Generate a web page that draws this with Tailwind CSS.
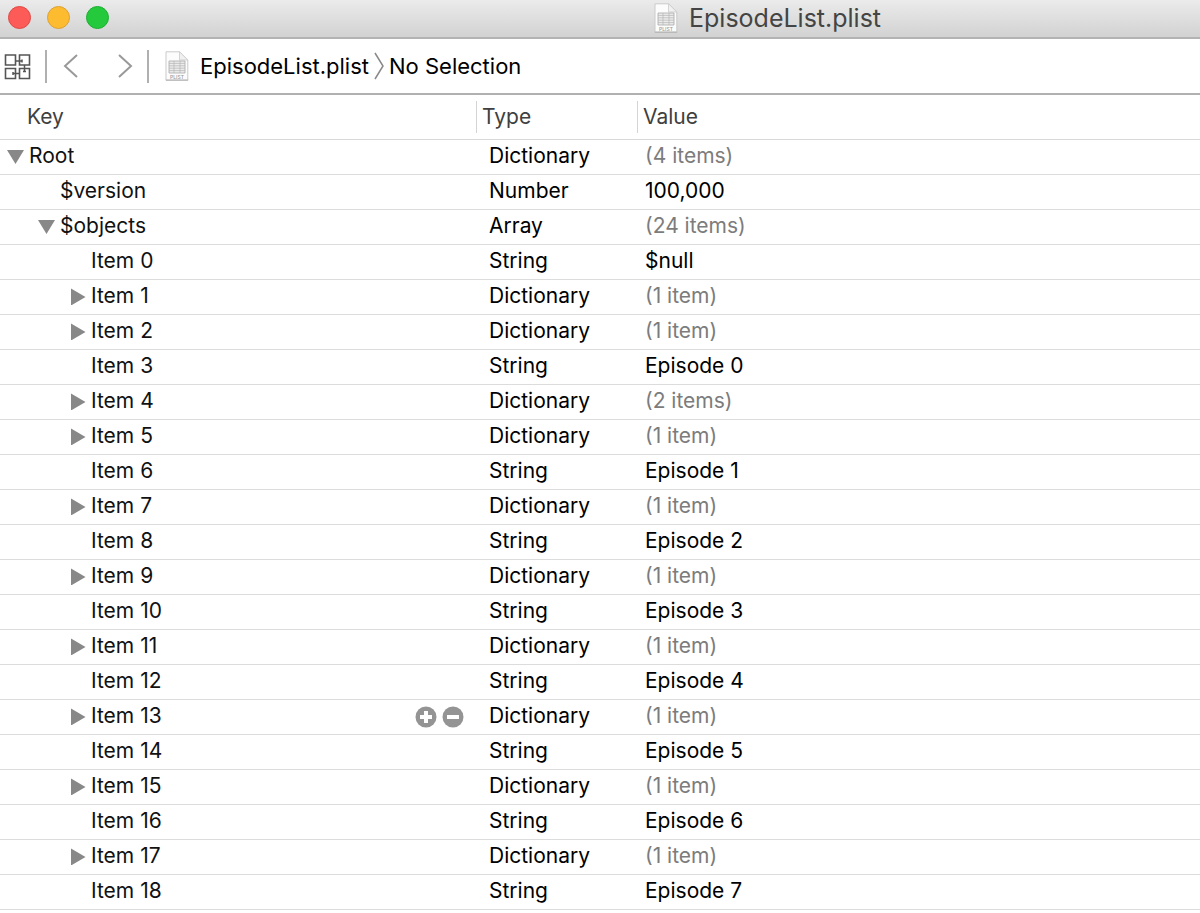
<!DOCTYPE html>
<html lang="en">
<head>
<meta charset="utf-8">
<meta name="viewport" content="width=device-width, initial-scale=1">
<title>EpisodeList.plist</title>
<script src="https://cdn.jsdelivr.net/npm/@tailwindcss/browser@4"></script>
</head>
<body class="min-h-screen overflow-x-hidden bg-white font-['Inter','Liberation_Sans',sans-serif] text-[21px] leading-7 text-[#111]">

<svg class="hidden" aria-hidden="true">
  <symbol id="plist" viewBox="0 0 24 30">
    <path d="M1 .8h13.500L22.800 9v20H1z" fill="#fcfcfc" stroke="#cacaca" stroke-width="1"/>
    <path d="M.8 29.200h22.400" stroke="#b0b0b0" stroke-width="1"/>
    <path d="M14.500.8V9h8.300z" fill="#f1f1f1" stroke="#cacaca" stroke-width=".8"/>
    <path d="M4 10h16v12H4z" fill="#ececec" stroke="#a8a8a8" stroke-width=".8"/>
    <path d="M4 12.400h16M4 14.800h16M4 17.200h16M4 19.600h16M9 10v12M15 10v12" stroke="#b4b4b4" stroke-width=".7"/>
    <text x="12" y="28" text-anchor="middle" font-size="5" font-weight="500" fill="#999">PLIST</text>
  </symbol>
</svg>

<header class="flex h-[39px] items-center border-b-2 border-[#b3b3b3] bg-linear-to-b from-[#ebebeb] to-[#d2d2d2]">
  <div class="flex w-[54.500%] shrink-0 gap-4 pb-0.5 pl-2">
    <button aria-label="Close" class="size-[23px] rounded-full border border-[#dd4a45] bg-[#fc5b57]"></button>
    <button aria-label="Minimize" class="size-[23px] rounded-full border border-[#dda033] bg-[#fdbc2f]"></button>
    <button aria-label="Zoom" class="size-[23px] rounded-full border border-[#1fae34] bg-[#24ca3c]"></button>
  </div>
  <h1 class="flex items-center gap-[11px] pb-0.5 text-[25px] whitespace-nowrap text-[#444]">
    <svg class="h-[30px] w-6" aria-hidden="true"><use href="#plist"/></svg>EpisodeList.plist
  </h1>
</header>

<nav aria-label="Jump bar" class="flex h-14 items-center border-b-2 border-[#b0b0b0] text-[22px] whitespace-nowrap text-black">
  <button aria-label="Related items" class="ml-1">
    <svg class="h-7 w-[27px]" viewBox="0 0 27 28" fill="none" stroke="#555" stroke-width="1.600" aria-hidden="true">
      <path d="M1.500 3h10v10h-10zM15.500 3h10v10h-10zM1.500 16.500h10v10h-10zM15.500 16.500h10v10h-10z"/>
      <path d="M11.500 9h6.500M20.500 13v6.500M9 21.500h6.500M18 7.500v3M19 19.500h3M9 20v3" stroke-width="1.500"/>
    </svg>
  </button>
  <span class="ml-3.5 h-[33px] w-0.5 bg-[#b0b0b0]"></span>
  <button aria-label="Back" class="ml-4">
    <svg class="h-6 w-4" viewBox="0 0 16 24" fill="none" stroke="#999" stroke-width="2" aria-hidden="true"><path d="M14 1 2 12l12 11"/></svg>
  </button>
  <button aria-label="Forward" class="ml-[38px]">
    <svg class="h-6 w-4" viewBox="0 0 16 24" fill="none" stroke="#999" stroke-width="2" aria-hidden="true"><path d="m2 1 12 11L2 23"/></svg>
  </button>
  <span class="ml-[14px] h-[33px] w-0.5 bg-[#b0b0b0]"></span>
  <a href="#" class="ml-4 flex items-center gap-[11px]">
    <svg class="h-[30px] w-6" aria-hidden="true"><use href="#plist"/></svg>EpisodeList.plist
  </a>
  <svg class="mx-1 h-7 w-3" viewBox="0 0 12 28" fill="none" stroke="#888" stroke-width="1.500" aria-hidden="true"><path d="m2 1 8 13-8 13"/></svg>
  <a href="#">No Selection</a>
</nav>

<table class="w-full table-fixed border-separate border-spacing-0 text-left">
  <colgroup><col class="w-[476px]"><col class="w-[161px]"><col></colgroup>
  <thead class="text-[#404040]">
    <tr>
      <th scope="col" class="h-[45px] border-b border-[#d9d9d9] p-0 pl-[27px] font-normal">Key</th>
      <th scope="col" class="h-[45px] border-b border-[#d9d9d9] p-0 font-normal"><div class="border-l border-[#d4d4d4] py-0.5 pl-[5px]">Type</div></th>
      <th scope="col" class="h-[45px] border-b border-[#d9d9d9] p-0 font-normal"><div class="border-l border-[#d4d4d4] py-0.5 pl-[5px]">Value</div></th>
    </tr>
  </thead>
  <tbody id="rows"></tbody>
</table>

<script>
// [depth, state, key, type, value]
const entries = [
  [0, 'open', 'Root', 'Dictionary', '(4 items)'],
  [1, '', '$version', 'Number', '100,000'],
  [1, 'open', '$objects', 'Array', '(24 items)'],
  [2, '', 'Item 0', 'String', '$null'],
  [2, 'closed', 'Item 1', 'Dictionary', '(1 item)'],
  [2, 'closed', 'Item 2', 'Dictionary', '(1 item)'],
  [2, '', 'Item 3', 'String', 'Episode 0'],
  [2, 'closed', 'Item 4', 'Dictionary', '(2 items)'],
  [2, 'closed', 'Item 5', 'Dictionary', '(1 item)'],
  [2, '', 'Item 6', 'String', 'Episode 1'],
  [2, 'closed', 'Item 7', 'Dictionary', '(1 item)'],
  [2, '', 'Item 8', 'String', 'Episode 2'],
  [2, 'closed', 'Item 9', 'Dictionary', '(1 item)'],
  [2, '', 'Item 10', 'String', 'Episode 3'],
  [2, 'closed', 'Item 11', 'Dictionary', '(1 item)'],
  [2, '', 'Item 12', 'String', 'Episode 4'],
  [2, 'closed', 'Item 13', 'Dictionary', '(1 item)'],
  [2, '', 'Item 14', 'String', 'Episode 5'],
  [2, 'closed', 'Item 15', 'Dictionary', '(1 item)'],
  [2, '', 'Item 16', 'String', 'Episode 6'],
  [2, 'closed', 'Item 17', 'Dictionary', '(1 item)'],
  [2, '', 'Item 18', 'String', 'Episode 7'],
];
const indent = ['pl-[7px]', 'pl-[38px]', 'pl-[69px]'];
const arrows = { open: 'M0 2h17L8.500 16z', closed: 'M2 .5v17l14.500-8.500z' };
const toggle = (state, key) => state
  ? `<button aria-label="Toggle ${key}" aria-expanded="${state === 'open'}" class="mr-[5px]"><svg class="size-[17px]" viewBox="0 0 17 17" fill="#888" aria-hidden="true"><path d="${arrows[state]}"/></svg></button>`
  : '<span class="mr-[5px] w-[17px]"></span>';
const actions = `<span class="mt-0.5 mr-3 ml-auto flex gap-[5px]">
  <button aria-label="Add item"><svg class="size-[22px]" viewBox="0 0 22 22" aria-hidden="true"><circle cx="11" cy="11" r="10.500" fill="#949494"/><path d="M11 5v12M5 11h12" stroke="#fff" stroke-width="4"/></svg></button>
  <button aria-label="Remove item"><svg class="size-[22px]" viewBox="0 0 22 22" aria-hidden="true"><circle cx="11" cy="11" r="10.500" fill="#949494"/><path d="M5 11h12" stroke="#fff" stroke-width="4"/></svg></button>
</span>`;
document.getElementById('rows').innerHTML = entries.map(([depth, state, key, type, value]) => `<tr>
  <td class="h-[35px] border-b border-[#dcdcdc] p-0 pb-0.5"><div class="flex items-center ${indent[depth]}">${toggle(state, key)}<span>${key}</span>${key === 'Item 13' ? actions : ''}</div></td>
  <td class="h-[35px] border-b border-[#dcdcdc] p-0 pb-0.5 pl-[13px] text-black">${type}</td>
  <td class="h-[35px] border-b border-[#dcdcdc] p-0 pb-0.5 pl-2 ${value.startsWith('(') ? 'text-[#7c7c7c]' : 'text-black'}">${value}</td>
</tr>`).join('');
</script>
</body>
</html>
